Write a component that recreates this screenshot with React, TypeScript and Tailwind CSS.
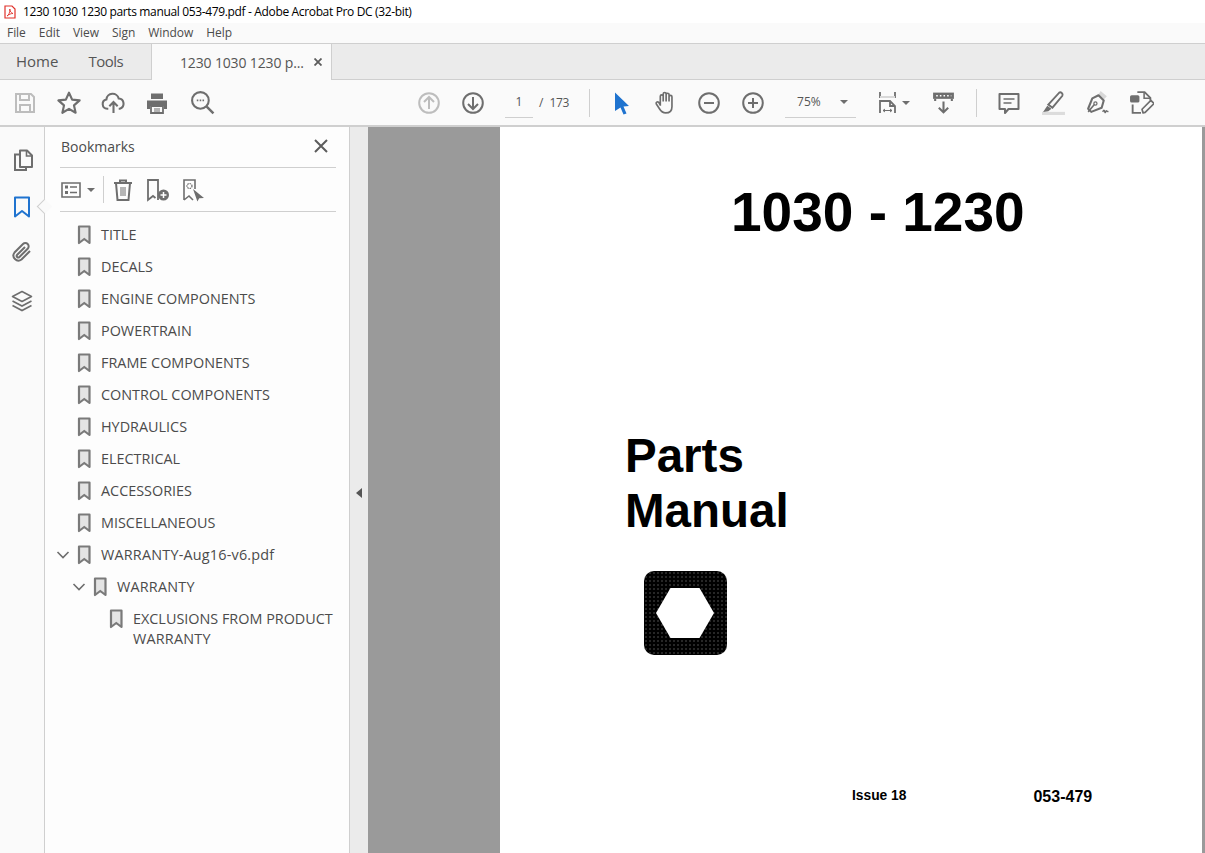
import type { ReactNode } from "react";

const bookmarks = [
  "TITLE",
  "DECALS",
  "ENGINE COMPONENTS",
  "POWERTRAIN",
  "FRAME COMPONENTS",
  "CONTROL COMPONENTS",
  "HYDRAULICS",
  "ELECTRICAL",
  "ACCESSORIES",
  "MISCELLANEOUS",
];

function Icon({ children, className = "text-[#6e6e6e]", size = 24 }: { children: ReactNode; className?: string; size?: number }) {
  return (
    <svg width={size} height={size} viewBox="0 0 24 24" fill="none" stroke="currentColor" strokeWidth="2" className={className}>
      {children}
    </svg>
  );
}

function ToolButton({ children, className = "w-[44px]" }: { children: ReactNode; className?: string }) {
  return <div className={`flex h-full shrink-0 items-center justify-center ${className}`}>{children}</div>;
}

function Ribbon() {
  return (
    <svg width="14" height="20" viewBox="0 0 14 20" className="shrink-0">
      <path d="M2 1.500h10.500v16.500l-5.250-4-5.250 4z" fill="#e4e4e4" stroke="#7a7a7a" strokeWidth="2.200" strokeLinejoin="round" />
    </svg>
  );
}

function Chevron() {
  return (
    <svg width="14" height="10" viewBox="0 0 14 10" fill="none" stroke="#6e6e6e" strokeWidth="1.600" className="shrink-0">
      <path d="M1.500 2l5.500 5.500 5.500-5.500" />
    </svg>
  );
}

function Caret() {
  return <div className="h-0 w-0 border-x-[4px] border-t-[4px] border-x-transparent border-t-[#6e6e6e]" />;
}

function Toolbar() {
  return (
    <div className="flex h-[47px] items-center border-b-2 border-[#cfcfcf] bg-[#fafafa] pl-[3px]">
      <ToolButton>
        <Icon className="text-[#bdbdbd]">
          <path d="M3 3h15l3 3v15H3z" />
          <path d="M7 3v6h9V3M7 21v-7h10v7" />
        </Icon>
      </ToolButton>
      <ToolButton>
        <Icon size={26}>
          <path d="M12 2.500l2.900 6.400 6.900.700-5.200 4.600 1.500 6.800L12 17.400 5.900 21l1.500-6.800-5.200-4.600 6.900-.700z" strokeLinejoin="round" />
        </Icon>
      </ToolButton>
      <ToolButton>
        <Icon size={25}>
          <path d="M7 18H6a4.500 4.500 0 0 1-.8-8.900A6 6 0 0 1 17 8.200a5 5 0 0 1 1 9.800h-1" />
          <path d="M12 22v-10M8 15.500l4-4 4 4" />
        </Icon>
      </ToolButton>
      <ToolButton>
        <Icon>
          <path d="M6 8V2.500h12V8H6z" fill="currentColor" stroke="none" />
          <path d="M2 9.500h20v8.500h-3v-3H5v3H2z" fill="currentColor" stroke="none" />
          <path d="M6 15h12v7H6z" strokeWidth="1.800" />
          <path d="M9 18h6M9 20h6" strokeWidth="1" />
        </Icon>
      </ToolButton>
      <ToolButton className="w-[46px]">
        <Icon size={25}>
          <circle cx="10" cy="10" r="8" />
          <path d="M16 16l6.500 6.500" strokeWidth="2.400" />
          <path d="M6.500 10h1.500M9.300 10h1.500M12 10h1.500" strokeWidth="1.600" />
        </Icon>
      </ToolButton>

      <ToolButton className="ml-[182px] w-[44px]">
        <Icon className="text-[#bdbdbd]">
          <circle cx="12" cy="12" r="9.800" />
          <path d="M12 18V6.500M7 11l5-5 5 5" />
        </Icon>
      </ToolButton>
      <ToolButton>
        <Icon>
          <circle cx="12" cy="12" r="9.800" />
          <path d="M12 6v11.500M7 13l5 5 5-5" />
        </Icon>
      </ToolButton>
      <div className="ml-[10px] flex h-[30px] w-[28px] items-center justify-center border-b border-[#cfcfcf] text-[12px] text-[#555]">1</div>
      <span className="ml-[6px] text-[12px] text-[#555]">/</span>
      <span className="ml-[6px] text-[12px] tracking-[-0.3px] text-[#555]">173</span>
      <div className="ml-[20px] h-[28px] w-px bg-[#cfcfcf]" />
      <ToolButton className="ml-[10px] w-[44px]">
        <svg width="16" height="24" viewBox="0 0 16 24">
          <path d="M1 1.500l14 13.500-5.500.5 3 7-3 1-3-7L1 20z" fill="#1f73cf" />
        </svg>
      </ToolButton>
      <ToolButton className="w-[43px]">
        <Icon size={25}>
          <path d="M7 15V6a1.400 1.400 0 0 1 2.800 0v5M9.800 11V3.800a1.400 1.400 0 0 1 2.800 0V11M12.600 11V4.500a1.400 1.400 0 0 1 2.800 0V11M15.400 11V6.500a1.400 1.400 0 0 1 2.800 0V16c0 4-2.500 6-6 6-3 0-4.500-1.500-6-4l-3-4.500c-.8-1.500 1-2.800 2.300-1.600L7 14.500" strokeWidth="1.600" strokeLinejoin="round" />
        </Icon>
      </ToolButton>
      <ToolButton>
        <Icon>
          <circle cx="12" cy="12" r="9.800" />
          <path d="M7 12h10" />
        </Icon>
      </ToolButton>
      <ToolButton>
        <Icon>
          <circle cx="12" cy="12" r="9.800" />
          <path d="M7 12h10M12 7v10" />
        </Icon>
      </ToolButton>
      <div className="ml-[10px] flex h-[30px] w-[71px] items-center border-b border-[#cfcfcf] pl-[12px] text-[12px] text-[#555]">
        75%
        <div className="ml-auto mr-[8px]">
          <Caret />
        </div>
      </div>
      <ToolButton className="ml-[20px] w-[24px]">
        <Icon size={26}>
          <path d="M4 1v5h15V1" strokeWidth="1.800" />
          <path d="M4 6h15" stroke="#d8d8d8" strokeWidth="2" />
          <path d="M4 22V10h10l5 5v7M14 10v5h5" strokeWidth="1.800" />
          <path d="M7 19.500h9M7 19.500l2-1.500M7 19.500l2 1.500M16 19.500l-2-1.500M16 19.500l-2 1.500" strokeWidth="1" />
        </Icon>
      </ToolButton>
      <div className="ml-[2px]">
        <Caret />
      </div>
      <ToolButton className="ml-[11px] w-[44px]">
        <Icon size={25}>
          <path d="M2 2.500h20v6H2z" fill="currentColor" stroke="none" />
          <path d="M5 5.500h1.500M8.500 5.500H10M12 5.500h1.500M15.500 5.500H17M19 5.500h.5" stroke="#fff" strokeWidth="1.500" />
          <path d="M4 8.500v2M20 8.500v2M12 11v10M7.500 17l4.500 4.500 4.500-4.500" />
        </Icon>
      </ToolButton>
      <div className="ml-[11px] h-[28px] w-px bg-[#cfcfcf]" />
      <ToolButton className="ml-[10px] w-[44px]">
        <Icon>
          <path d="M2.500 3h19v15h-10l-3.500 4v-4H2.500z" strokeLinejoin="round" />
          <path d="M6.500 8h11M6.500 12h8" strokeWidth="1.500" />
        </Icon>
      </ToolButton>
      <ToolButton>
        <Icon size={25}>
          <path d="M1 21h22v3H1z" fill="#dcdcdc" stroke="none" />
          <path d="M7 14L17.500 2.500c1.500-1 4 1 3 3L11 17z" strokeWidth="1.800" />
          <path d="M6 15l4 3-3 2.500-5 .5z" fill="currentColor" stroke="none" />
        </Icon>
      </ToolButton>
      <ToolButton>
        <Icon size={25}>
          <path d="M15 1l6 5-3 3-5-5z" fill="#d8d8d8" stroke="none" />
          <path d="M13 5l5 5-2 7-10 4-3-3 4-10z" strokeLinejoin="round" />
          <path d="M3 21l6-7" strokeWidth="1.500" />
          <circle cx="10" cy="13" r="1.500" strokeWidth="1.200" />
          <path d="M17 21c1-2 1.500-2 2 0s1-1 1.500-1 .5 1 2 .5" strokeWidth="1.400" />
        </Icon>
      </ToolButton>
      <ToolButton>
        <Icon size={25}>
          <path d="M8 2h7l5.500 5.500V10" strokeWidth="1.800" />
          <path d="M14.500 2v6h6" strokeWidth="1.500" />
          <rect x="1" y="5" width="9" height="7" rx="1.500" fill="currentColor" stroke="none" />
          <path d="M3.500 14v8h8" strokeWidth="1.800" />
          <path d="M13.500 22l-1-3.500 8.500-8.500 3 3-8.500 8.500z" strokeWidth="1.600" strokeLinejoin="round" />
        </Icon>
      </ToolButton>
    </div>
  );
}

function Rail() {
  return (
    <div className="flex w-[45px] shrink-0 flex-col items-center border-r border-[#cfcfcf] bg-[#fafafa] pt-[21px] pr-[1px]">
      <div className="ml-[2px]">
        <Icon>
          <path d="M9 2.500h7l5 5v11.500H9z" strokeLinejoin="round" />
          <path d="M15.500 2.500v5.500H21" strokeWidth="1.600" />
          <path d="M9 6.500H4V22h11v-3" />
        </Icon>
      </div>
      <div className="relative mt-[23px]">
        <Icon className="text-[#1f73cf]">
          <path d="M5 2.500h14v19l-7-5.500-7 5.500z" strokeLinejoin="round" />
        </Icon>
        <div className="absolute left-[29px] top-[6px] h-[11px] w-[11px] rotate-45 border-b border-l border-[#cfcfcf] bg-[#fafafa]" />
      </div>
      <div className="mt-[21px]">
        <Icon>
          <path d="M20 11l-8.500 8.500a5 5 0 0 1-7-7L13 4a3.300 3.300 0 0 1 4.700 4.700l-8.300 8.300a1.500 1.500 0 0 1-2.200-2.200L15 7" />
        </Icon>
      </div>
      <div className="mt-[25px]">
        <Icon>
          <path d="M12 2.500l9.500 5-9.500 5-9.500-5z" strokeLinejoin="round" strokeWidth="1.600" />
          <path d="M2.500 12l9.500 5 9.500-5M2.500 16.500l9.500 5 9.500-5" strokeWidth="1.600" />
        </Icon>
      </div>
    </div>
  );
}

function BookmarksPanel() {
  return (
    <div className="flex w-[305px] shrink-0 flex-col border-r border-[#cfcfcf] bg-[#fdfdfd]">
      <div className="ml-[15px] mr-[13px] flex h-[41px] items-center justify-between border-b border-[#cfcfcf] pb-[2px] pl-px pr-[8px] text-[14px] text-[#4b4b4b]">
        <span>Bookmarks</span>
        <svg width="14" height="14" viewBox="0 0 14 14" stroke="#5c5c5c" strokeWidth="2">
          <path d="M1 1l12 12M13 1L1 13" />
        </svg>
      </div>
      <div className="ml-[15px] mr-[13px] flex h-[44px] items-center border-b border-[#cfcfcf]">
        <svg width="20" height="16" viewBox="0 0 20 16" fill="none" stroke="#6e6e6e" strokeWidth="1.600" className="ml-px">
          <path d="M1 1h18v14H1z" />
          <path d="M4 5h3M4 10.500h3" strokeWidth="3" />
          <path d="M9 5h7M9 10.500h7" />
        </svg>
        <div className="ml-[6px]">
          <Caret />
        </div>
        <div className="ml-[8px] h-[27px] w-px bg-[#cfcfcf]" />
        <div className="ml-[7px]">
          <Icon>
            <path d="M3 5h18M9 5V2.500h6V5M5 5l1.500 17h11L19 5" />
            <path d="M10 9v9M12 9v9M14 9v9" strokeWidth="1" />
          </Icon>
        </div>
        <svg width="24" height="24" viewBox="0 0 24 24" fill="none" stroke="#6e6e6e" strokeWidth="1.800" className="ml-[11px]">
          <path d="M12 22V2H2v20l5-4 2.500 2" />
          <circle cx="17.500" cy="17" r="5.500" fill="#6e6e6e" stroke="none" />
          <path d="M14.500 17h6M17.500 14v6" stroke="#fff" strokeWidth="1.500" />
        </svg>
        <svg width="24" height="24" viewBox="0 0 24 24" fill="none" stroke="#6e6e6e" strokeWidth="1.600" className="ml-[12px]">
          <path d="M2 22V2h11v9M2 22l5-4 4 4" />
          <circle cx="7.500" cy="8" r="2.500" strokeWidth="1.200" strokeDasharray="1.500 .8" />
          <path d="M11 11l11 9-4.800.3-1.800 3.200z" fill="#6e6e6e" stroke="none" />
        </svg>
      </div>
      <div className="flex flex-col pt-[7px] text-[14.4px] leading-[20px] text-[#4b4b4b]">
        {bookmarks.map((name) => (
          <div key={name} className="flex h-[32px] items-center gap-[10px] pl-[32px]">
            <Ribbon />
            <span>{name}</span>
          </div>
        ))}
        <div className="flex h-[32px] items-center pl-[11px]">
          <Chevron />
          <div className="ml-[7px]">
            <Ribbon />
          </div>
          <span className="ml-[10px] tracking-[0.2px]">WARRANTY-Aug16-v6.pdf</span>
        </div>
        <div className="flex h-[32px] items-center pl-[27px]">
          <Chevron />
          <div className="ml-[7px]">
            <Ribbon />
          </div>
          <span className="ml-[10px] tracking-[0.2px]">WARRANTY</span>
        </div>
        <div className="flex items-start gap-[10px] pl-[64px] pt-[6px]">
          <Ribbon />
          <span className="w-[205px]">
            EXCLUSIONS FROM PRODUCT
            <br />
            <span className="tracking-[0.2px]">WARRANTY</span>
          </span>
        </div>
      </div>
    </div>
  );
}

function PdfPage() {
  return (
    <div className="flex h-full w-[702px] shrink-0 flex-col bg-white font-['Liberation_Sans',sans-serif] font-bold text-black">
      <div className="mt-[45px] ml-[231px] text-[55px] leading-[80px]">1030 - 1230</div>
      <div className="mt-[176px] ml-[125px] text-[47.5px] leading-[55px]">
        Parts
        <br />
        Manual
      </div>
      <div className="mt-[33px] ml-[144px]">
        <div className="flex h-[84px] w-[83px] items-center justify-center rounded-[10px] bg-black bg-[radial-gradient(circle,#3c3c3c_0.6px,transparent_0.9px)] bg-[length:4px_4px] pr-[1px]">
          <svg width="58" height="50" viewBox="0 0 58 50">
            <path d="M14.500 0h29L58 25 43.500 50h-29L0 25z" fill="#fff" />
          </svg>
        </div>
      </div>
      <div className="mt-[131px] flex items-start pl-[352px]">
        <span className="text-[13.800px] leading-[20px]">Issue 18</span>
        <span className="ml-[127px] mt-[1px] text-[16px] leading-[20px]">053-479</span>
      </div>
    </div>
  );
}

export default function App() {
  return (
    <div className="flex h-[853px] w-[1205px] flex-col overflow-hidden bg-white font-['Open_Sans',sans-serif]">
      <div className="flex h-[23px] items-center gap-[7px] pl-[4px] text-[12px] tracking-[-0.35px] text-black">
        <svg width="12" height="14" viewBox="0 0 12 14" fill="none" stroke="#e0312a" strokeWidth="1.200">
          <path d="M1 1h7l3 3v9H1z" />
          <path d="M3 11c2-1 3-4 2.800-7 .4 3 1.500 4 3.200 4.500-2 0-4 .8-6 2.500z" strokeWidth=".9" />
        </svg>
        <span>1230 1030 1230 parts manual 053-479.pdf - Adobe Acrobat Pro DC (32-bit)</span>
      </div>
      <div className="flex h-[20px] items-center gap-[13px] bg-[#fafafa] pl-[7px] text-[12px] tracking-[-0.05px] text-[#4b4b4b]">
        <span>File</span>
        <span>Edit</span>
        <span>View</span>
        <span>Sign</span>
        <span>Window</span>
        <span>Help</span>
      </div>
      <div className="flex h-[37px] border-y border-[#cfcfcf] bg-[#ebebeb]">
        <div className="flex w-[151px] items-center gap-[30px] pl-[16px] text-[15px] text-[#555]">
          <span>Home</span>
          <span className="tracking-[-0.5px]">Tools</span>
        </div>
        <div className="-mb-px flex w-[181px] items-center border-x border-[#cfcfcf] bg-[#fafafa] pl-[28px] text-[14px] text-[#555]">
          <span className="tracking-[-0.15px]">1230 1030 1230 p...</span>
          <svg width="8" height="8" viewBox="0 0 8 8" stroke="#5c5c5c" strokeWidth="1.800" className="ml-[10px]">
            <path d="M.5.500l7 7M7.500.500l-7 7" />
          </svg>
        </div>
      </div>
      <Toolbar />
      <div className="flex min-h-0 flex-1">
        <Rail />
        <BookmarksPanel />
        <div className="flex w-[18px] shrink-0 items-center justify-center bg-[#ebebeb]">
          <div className="mt-[6px] h-0 w-0 border-y-[5px] border-r-[6px] border-y-transparent border-r-[#555]" />
        </div>
        <div className="flex flex-1 bg-[#9a9a9a] pl-[132px]">
          <PdfPage />
        </div>
      </div>
    </div>
  );
}
